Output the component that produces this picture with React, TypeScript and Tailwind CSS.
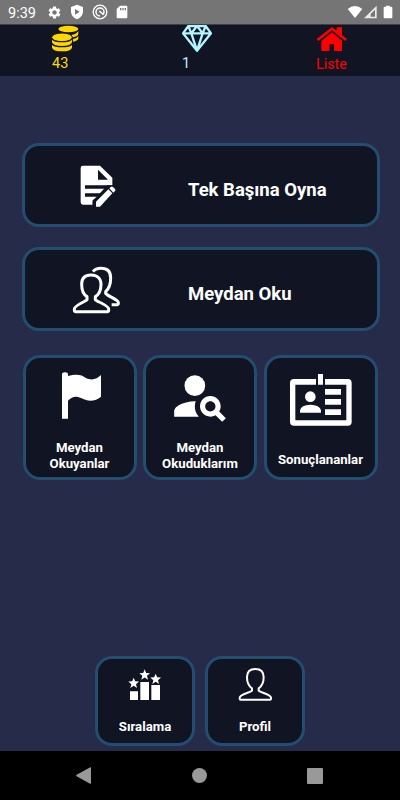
import { ReactNode } from 'react'
import { MdPersonSearch, MdSettings } from 'react-icons/md'

interface CardProps {
  icon: ReactNode
  className: string
  children: ReactNode
}

const STAR = 'M0-17 4.5-6 16-5.500 7 2.500 10 14 0 7.500-10 14-7 2.500-16-5.500-4.500-6Z'

function CoinsIcon() {
  return (
    <svg viewBox="0 0 84 84" className="h-7 w-7 fill-[#ffd600]">
      <ellipse cx="52" cy="12" rx="30" ry="10" />
      <path d="M82 18V27Q80 35 65 37L60 30Q76 28 82 18ZM82 33V41Q80 47 66 50V42Q78 40 82 33Z" />
      <ellipse cx="33" cy="37" rx="31" ry="13" className="stroke-[#111422] stroke-[3]" />
      <path d="M3 44Q10 52 33 52T63 44V52Q60 63 33 63T3 52ZM3 60Q10 67 33 67T63 60V68Q60 79 33 79T3 68Z" />
    </svg>
  )
}

function DiamondIcon() {
  return (
    <svg viewBox="0 0 90 84" className="h-7 w-[30px] fill-none stroke-[#b2f5ff] stroke-[7]" strokeLinejoin="round">
      <path d="M19 3H71L87 25 45 77 3 25ZM3 25H87M19 3 28 25 45 3 62 25 71 3M28 25 45 77 62 25" />
    </svg>
  )
}

function HouseIcon() {
  return (
    <svg viewBox="0 0 96 78" className="h-[26px] w-8 fill-[#ff0000]">
      <path d="M2 39 48 3 62 14V4H78V27L93 39 88 45 48 13 7 45Z" />
      <path d="M16 45 48 19 78 44V75H54V55H40V75H16Z" />
    </svg>
  )
}

function DocumentIcon() {
  return (
    <svg viewBox="0 0 108 126" className="h-[42px] w-9 fill-white">
      <path d="M9 2H60L97 38V61H82L38 108V119H9Q2 119 2 112V9Q2 2 9 2Z" />
      <path className="fill-[#111422]" d="M54 14V44H84ZM15 61H98V71H15ZM15 85H63L53 95H15ZM82 71H98V90L52 124H38V106Z" />
      <path d="M48 110 85 73 97 85 60 125H48ZM88 70 93 65Q96 63 99 66L105 72Q108 75 105 78L100 83Z" />
    </svg>
  )
}

function PeopleIcon() {
  return (
    <svg viewBox="0 0 144 144" className="h-12 w-12 fill-none stroke-white stroke-[9]" strokeLinejoin="round">
      <path d="M57 27C38 27 29 38 29 55C29 74 33 85 45 92V101C42 106 7 118 7 129V133Q7 137 11 137H106Q110 137 110 133V129C110 118 73 106 70 101V92C82 85 87 74 87 55C87 38 76 27 57 27Z" />
      <path d="M63 17C69 9 78 7 87 7C106 7 116 18 116 36C116 56 112 67 101 77V82C106 90 139 101 139 109V112Q139 116 135 116H119" />
    </svg>
  )
}

function PersonIcon() {
  return (
    <svg viewBox="0 0 105 105" className="h-[35px] w-[35px] fill-none stroke-white stroke-[6]" strokeLinejoin="round">
      <path d="M52 6C35 6 27 16 27 31C27 48 31 57 42 64V71C38 76 5 82 5 92V95Q5 98 8 98H96Q99 98 99 95V92C99 82 66 76 62 71V64C73 57 77 48 77 31C77 16 69 6 52 6Z" />
    </svg>
  )
}

function FlagIcon() {
  return (
    <svg viewBox="0 0 126 144" className="ml-1 h-12 w-[42px] fill-white">
      <path d="M3 7Q3 1 12 1T21 8V12C45 5 62 7 75 18C92 27 108 21 120 9V74C105 86 85 92 62 79C45 69 30 75 21 86V140H3Z" />
    </svg>
  )
}

function BadgeIcon() {
  return (
    <svg viewBox="0 0 192 162" className="h-[54px] w-16 fill-white">
      <path fillRule="evenodd" d="M15 18H177Q188 18 188 30V146Q188 158 177 158H15Q3 158 3 146V30Q3 18 15 18ZM19 35V142H172V35Z" />
      <path className="fill-[#111422]" d="M81 10H108V37H81Z" />
      <path d="M87 3H102V35H87ZM108 48H156V65H108ZM108 78H156V95H108ZM108 109H156V126H108ZM33 119V112Q36 96 64 95Q92 96 96 112V119Z" />
      <circle cx="64" cy="71" r="16" />
    </svg>
  )
}

function RankingIcon() {
  return (
    <svg viewBox="0 0 102 96" className="h-8 w-[34px] fill-white">
      <path d="M6 67H30V93H6ZM37 39H63V93H37ZM70 48H96V93H70Z" />
      <path transform="translate(17 43)" d={STAR} />
      <path transform="translate(50 18)" d={STAR} />
      <path transform="translate(83 31)" d={STAR} />
    </svg>
  )
}

function ShieldIcon() {
  return (
    <svg viewBox="0 0 42 48" className="h-4 w-3.5 fill-white">
      <path fillRule="evenodd" d="M21 2 39 9V22C39 34 31 42 21 46C11 42 3 34 3 22V9ZM15 15V32L29 23.500Z" />
    </svg>
  )
}

function RadarIcon() {
  return (
    <svg viewBox="0 0 48 48" className="h-4 w-4 fill-none stroke-white">
      <circle cx="24" cy="24" r="20.500" strokeWidth="4" />
      <path d="M24 36A12 12 0 1 1 36 24Q36 28 33 31L22 21" strokeWidth="4.500" />
    </svg>
  )
}

function SdCardIcon() {
  return (
    <svg viewBox="0 0 36 42" className="h-3.5 w-3 fill-white">
      <path fillRule="evenodd" d="M12 2H31Q34 2 34 5V37Q34 40 31 40H5Q2 40 2 37V12ZM12 9V16H16V9ZM19 9V16H23V9ZM26 9V16H30V9Z" />
    </svg>
  )
}

function StatusBar() {
  return (
    <div className="flex h-[25px] items-center border-b border-[#3f4046] bg-[#757575] pl-2 pr-[7px] text-white">
      <span className="w-[39px] pt-[3px] text-[14.500px] leading-5">9:39</span>
      <div className="flex items-center gap-2">
        <MdSettings className="h-[15px] w-[15px]" />
        <ShieldIcon />
        <RadarIcon />
        <SdCardIcon />
      </div>
      <svg viewBox="0 0 138 42" className="ml-auto h-3.5 w-[46px] fill-white">
        <path d="M2 12Q24-6 46 12L24 39Z" />
        <path fillRule="evenodd" d="M51 40 89 2V40ZM71 35H84V14L71 27Z" opacity=".85" />
        <path d="M117 5V2H128V5H133Q136 5 136 8V37Q136 40 133 40H113Q110 40 110 37V8Q110 5 113 5Z" />
      </svg>
    </div>
  )
}

function Header() {
  return (
    <header className="flex h-[50.500px] bg-[#111422] text-[14.500px]">
      <div className="ml-[51px] w-[131px] text-[#fddc00]">
        <CoinsIcon />
        <p className="pl-px leading-[22px]">43</p>
      </div>
      <div className="w-[134px] text-[#b2f5ff]">
        <DiamondIcon />
        <p className="leading-[22px]">1</p>
      </div>
      <div className="text-[#ff0000]">
        <div className="flex h-7 pt-px"><HouseIcon /></div>
        <p className="text-[14.300px] leading-[22px]">Liste</p>
      </div>
    </header>
  )
}

function WideCard({ icon, className, children }: CardProps) {
  return (
    <button className={`flex h-[84px] w-[358px] items-center rounded-[17px] border-[3px] border-[#234e70] bg-[#111422] text-left text-[18.500px] font-bold ${className}`}>
      <span className="flex w-[163px] pt-0.5">{icon}</span>
      <span className="pt-2.5 leading-6">{children}</span>
    </button>
  )
}

function TileCard({ icon, className, children }: CardProps) {
  return (
    <button className={`flex flex-col items-center justify-between rounded-[17px] border-[3px] border-[#234e70] bg-[#111422] text-[13.200px] font-bold leading-[15.500px] ${className}`}>
      {icon}
      <span>{children}</span>
    </button>
  )
}

function NavBar() {
  return (
    <nav className="flex h-[49px] items-center justify-between bg-black pl-[76px] pr-[77px]">
      <svg viewBox="0 0 45 51" className="h-[17px] w-[15px] fill-[#999999]">
        <path d="M43 1Q45 0 45 3V48Q45 51 42 50L2 28Q-1 25 2 23Z" />
      </svg>
      <span className="h-[15px] w-[15px] rounded-full bg-[#999999]" />
      <span className="h-4 w-4 rounded-[1px] bg-[#999999]" />
    </nav>
  )
}

export default function App() {
  return (
    <div className="flex h-[800px] w-[400px] flex-col overflow-hidden bg-[#252b48] font-['Roboto',sans-serif] text-white">
      <StatusBar />
      <Header />
      <main className="flex flex-1 flex-col pb-[5px] pl-[22px] pt-[67.500px]">
        <WideCard className="" icon={<span className="pl-[55px]"><DocumentIcon /></span>}>
          Tek Başına Oyna
        </WideCard>
        <WideCard className="mt-5" icon={<span className="pl-[47px]"><PeopleIcon /></span>}>
          Meydan Oku
        </WideCard>
        <div className="mt-6 flex gap-[6.500px] pl-[0.500px]">
          <TileCard className="h-[125px] w-[114px] pb-[6px] pt-[14px]" icon={<FlagIcon />}>
            Meydan<br />Okuyanlar
          </TileCard>
          <TileCard className="h-[125px] w-[114px] pb-[6px] pt-[7px]" icon={<MdPersonSearch className="h-[62px] w-[62px]" />}>
            Meydan<br />Okuduklarım
          </TileCard>
          <TileCard className="h-[125px] w-[114px] pb-[9.500px] pt-[15px]" icon={<BadgeIcon />}>
            Sonuçlananlar
          </TileCard>
        </div>
        <div className="mt-auto flex gap-2.5 pl-[73px]">
          <TileCard className="h-[90px] w-[100px] pb-[8.500px] pt-2.5" icon={<RankingIcon />}>Sıralama</TileCard>
          <TileCard className="h-[90px] w-[100px] pb-[8.500px] pt-2" icon={<PersonIcon />}>Profil</TileCard>
        </div>
      </main>
      <NavBar />
    </div>
  )
}
